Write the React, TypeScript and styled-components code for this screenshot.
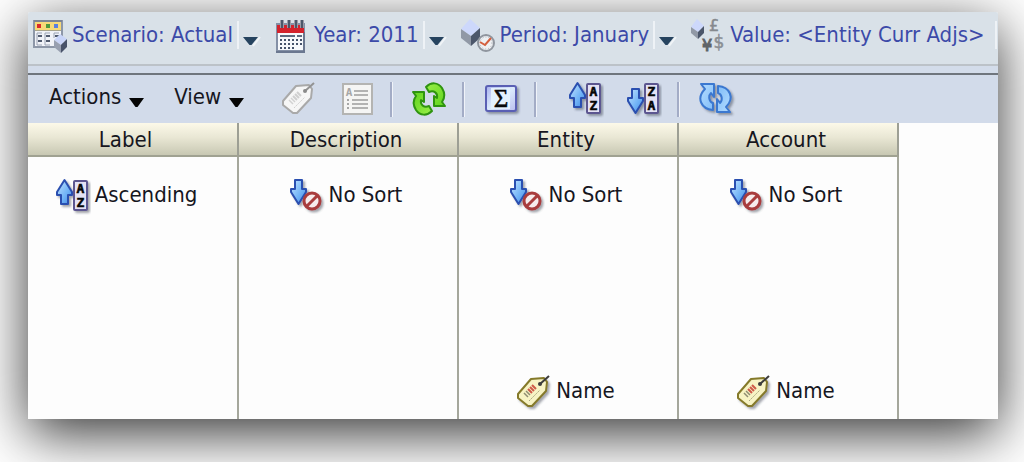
import React from "react";
import styled, { createGlobalStyle } from "styled-components";

const GlobalStyle = createGlobalStyle`
  * { box-sizing: border-box; }
  body {
    margin: 0;
    background: #fff;
    font-family: "DejaVu Sans Condensed", "DejaVu Sans", Tahoma, sans-serif;
    font-size: 22px;
    line-height: 28px;
    color: #16161e;
  }
`;

const Panel = styled.main`
  margin: 12px 26px 43px 28px;
  background: #fdfdfd;
  border-radius: 2px 2px 0 0;
  box-shadow: 0 15px 56px rgba(0, 0, 0, 0.8);
`;

const PovBar = styled.nav`
  display: flex;
  height: 52px;
  padding: 6px 1px 0 5px;
  gap: 14px;
  overflow: hidden;
  border-radius: 2px 2px 0 0;
  background: #d9e1e8;
`;

const PovButton = styled.button<{ $fill?: boolean }>`
  display: flex;
  flex: ${(p) => (p.$fill ? "1 0 auto" : "none")};
  height: 36px;
  padding: 0;
  border: 0;
  background: none;
  font: inherit;
  color: #3c4aa8;
  text-align: left;
  white-space: nowrap;
`;

const PovLabel = styled.span<{ $fill?: boolean }>`
  flex: ${(p) => (p.$fill ? 1 : "none")};
  height: 28px;
  margin: 3px 0 0 5px;
  padding-right: 4px;
  border-right: 2px solid #eef2f6;
`;

const PovArrow = styled.svg`
  flex: none;
  width: 19px;
  height: 12px;
  margin: 18px 0 0 3px;
`;

const Divider = styled.div`
  height: 11px;
  border-top: 2px solid #bcc2c8;
  border-bottom: 2px solid #6f757d;
  background: #d3dcea;
`;

const Toolbar = styled.div`
  display: flex;
  align-items: center;
  height: 48px;
  padding-left: 21px;
  overflow: hidden;
  background: #d2dbea;
`;

const MenuButton = styled.button`
  display: flex;
  flex: none;
  align-items: center;
  gap: 8px;
  margin-right: 30px;
  padding: 0 0 4px;
  border: 0;
  background: none;
  font: inherit;
  color: inherit;
`;

const MenuArrow = styled.svg`
  width: 15px;
  height: 9px;
  margin-top: 10px;
`;

const ToolGroup = styled.div<{ $start?: number }>`
  display: flex;
  flex: none;
  gap: 24px;
  margin-left: ${(p) => p.$start ?? 0}px;
`;

const ToolButton = styled.button`
  display: flex;
  padding: 0;
  border: 0;
  background: none;
`;

const Separator = styled.span<{ $wide?: boolean }>`
  flex: none;
  width: 3px;
  height: 35px;
  margin: 0 ${(p) => (p.$wide ? 32 : 19)}px 0 16px;
  border-left: 2px solid #a3acc6;
  border-right: 1px solid #f0f3f9;
`;

const Grid = styled.table`
  width: 100%;
  table-layout: fixed;
  border-collapse: separate;
  border-spacing: 0;
`;

const Col = styled.col<{ $width?: number }>`
  width: ${(p) => (p.$width ? `${p.$width}px` : "auto")};
`;

const HeadCell = styled.th<{ $first?: boolean }>`
  height: 34px;
  padding: 2px ${(p) => (p.$first ? 14 : 4)}px 0 0;
  border-right: 2px solid #9d9f94;
  border-bottom: 2px solid #a0a292;
  background: linear-gradient(#fcf9e9, #e9e7d4 45%, #c8c8b3);
  font-weight: 400;
  text-align: center;
`;

const BodyCell = styled.td<{ $first?: boolean; $bottom?: boolean }>`
  height: ${(p) => (p.$bottom ? 182 : 80)}px;
  padding: ${(p) => (p.$bottom ? 0 : 22)}px ${(p) => (p.$first ? 12 : 4)}px
    ${(p) => (p.$bottom ? 10 : 0)}px 0;
  border-right: 2px solid #a5a79c;
  vertical-align: ${(p) => (p.$bottom ? "bottom" : "top")};
`;

const CellItem = styled.div`
  display: flex;
  justify-content: center;
  gap: 5px;
  height: 34px;
`;

const CellText = styled.span`
  padding-top: 2px;
`;

const EmptyCell = styled.td``;

const Glyph = styled.svg`
  flex: none;
  width: 34px;
  height: 34px;
  overflow: visible;
`;

const Defs = styled.svg`
  position: absolute;
  width: 0;
  height: 0;
`;

const Gradients = () => (
  <Defs aria-hidden="true">
    <defs>
      <linearGradient id="blue" x1="0" y1="0" x2="1" y2="1">
        <stop offset="0" stopColor="#c4e4ff" />
        <stop offset="0.6" stopColor="#6fb2f6" />
        <stop offset="1" stopColor="#3f86e0" />
      </linearGradient>
      <linearGradient id="sky" x1="0" y1="0" x2="1" y2="1">
        <stop offset="0" stopColor="#b4dcff" />
        <stop offset="1" stopColor="#7fbcf8" />
      </linearGradient>
      <linearGradient id="green" x1="0" y1="0" x2="1" y2="1">
        <stop offset="0" stopColor="#9bf04a" />
        <stop offset="1" stopColor="#5fd31c" />
      </linearGradient>
      <linearGradient id="lilac" x1="0" y1="0" x2="1" y2="1">
        <stop offset="0" stopColor="#a9b2ee" />
        <stop offset="0.5" stopColor="#dbeafc" />
        <stop offset="1" stopColor="#b9bdf0" />
      </linearGradient>
      <filter id="drop" x="-20%" y="-20%" width="150%" height="150%">
        <feDropShadow dx="2" dy="2" stdDeviation="1" floodColor="#333a4a" floodOpacity="0.45" />
      </filter>
    </defs>
  </Defs>
);

const ScenarioIcon = () => (
  <Glyph viewBox="0 0 34 34">
    <rect x="1" y="3" width="28" height="26" fill="#f1f3f8" stroke="#8d97a8" strokeWidth="2" />
    <rect x="2" y="4" width="26" height="8" fill="#f7d978" />
    <path d="M1 3H29" stroke="#7c8494" strokeWidth="2" />
    <rect x="4" y="6" width="4" height="4" fill="#d92a2a" />
    <rect x="13" y="6" width="4" height="4" fill="#4f9a3c" />
    <rect x="21" y="6" width="4" height="4" fill="#5b7fe0" />
    <path d="M2 12.500H28" stroke="#a9a58a" />
    <path d="M4 15V27H9M12 15V27H17M21 15V20M4 15H9M12 15H17M21 15H26" fill="none" stroke="#9aa3b4" />
    <path d="M5 18H9M5 23H9M13 18H17M13 23H17M22 18H26" stroke="#525c70" strokeWidth="2" />
    <path d="M21 22L27 16L34 21L28 27Z" fill="#c9d5f8" />
    <path d="M21 22L28 27V35L21 29Z" fill="#98a0b0" />
    <path d="M28 27L34 21V29L28 35Z" fill="#48536a" />
  </Glyph>
);

const CalendarIcon = () => (
  <Glyph viewBox="0 0 34 34">
    <rect x="2" y="6" width="27" height="27" fill="#f6f8fb" stroke="#8490a6" strokeWidth="2" />
    <path d="M1 34H30M29 14V34" stroke="#6b7890" strokeWidth="2" />
    <rect x="2" y="7" width="27" height="8" fill="#d3222c" />
    <path d="M7 2V10M14 2V10M21 2V10M27 2V10" stroke="#f0dfe3" strokeWidth="4" />
    <path d="M7 2V10M14 2V10M21 2V10M27 2V10" stroke="#4b586b" strokeWidth="3" />
    <path d="M5 18H20M22 18H27" stroke="#5d6a80" strokeWidth="2" />
    <path d="M5 22H27M5 26H27M5 30H20" stroke="#46536b" strokeWidth="2" strokeDasharray="2 2" />
  </Glyph>
);

const PeriodIcon = () => (
  <Glyph viewBox="0 0 34 34">
    <path d="M0 11L9 1L19 10L10 18Z" fill="#cdd8fb" />
    <path d="M0 11L10 18V28L0 20Z" fill="#9199a6" />
    <path d="M10 18L19 10V20L10 28Z" fill="#4b566a" />
    <circle cx="25" cy="25" r="8" fill="#eef0f3" stroke="#8f959e" strokeWidth="2" />
    <circle cx="25" cy="25" r="6" fill="none" stroke="#a8adb5" strokeDasharray="1 2" />
    <path d="M19 24L24 27L30 20" fill="none" stroke="#d4603f" strokeWidth="2" />
  </Glyph>
);

const ValueIcon = () => (
  <Glyph viewBox="0 0 34 34" fontFamily="DejaVu Sans, sans-serif" fontSize="16" textAnchor="middle">
    <path d="M0 9L6 1L13 8L7 14Z" fill="#cdd8fb" />
    <path d="M0 9L7 14V21L0 15Z" fill="#9199a6" />
    <path d="M7 14L13 8V15L7 21Z" fill="#4b566a" />
    <text x="23" y="13" fill="#85898e" stroke="#85898e" strokeWidth="0.500">£</text>
    <text x="16" y="33" fill="#606468" stroke="#606468" strokeWidth="1">¥</text>
    <text x="28" y="30" fill="#8b8f94" stroke="#8b8f94" strokeWidth="0.500" fontSize="17">$</text>
  </Glyph>
);

const TagShape = ({ muted }: { muted?: boolean }) => (
  <Glyph viewBox="0 0 34 34">
    <path
      d="M1 19L14 4L27 3L30 7L29 16L15 31L11 31L1 23Z"
      fill={muted ? "#f6f6f6" : "#f7f3c4"}
      stroke={muted ? "#a9a9a9" : "#857a2c"}
      strokeWidth="2"
      strokeLinejoin="round"
      filter={muted ? undefined : "url(#drop)"}
    />
    <path d="M7 18L11 22M9 16L13 20" stroke={muted ? "#d2d2d2" : "#8f8d72"} strokeWidth="1.500" />
    <path d="M11 14L15 18M13 12L17 16M15 10L19 14" stroke={muted ? "#cfcfcf" : "#cf5a48"} strokeWidth="2" />
    <path d="M12 26L23 15" stroke={muted ? "#d0d0d0" : "#a8a680"} strokeDasharray="2 1" />
    <path d="M23 9L32 1" stroke={muted ? "#939393" : "#3c3c3c"} strokeWidth="2" />
    <circle cx="23" cy="9" r="2" fill={muted ? "#8a8a8a" : "#3c3c3c"} />
  </Glyph>
);

const PropertiesIcon = () => (
  <Glyph viewBox="0 0 34 34">
    <rect x="3" y="2" width="29" height="30" fill="#f5f5f4" stroke="#b4b4b2" strokeWidth="2" />
    <text x="9" y="14" fontSize="11" fontWeight="bold" fill="#a6a6a6" textAnchor="middle" fontFamily="DejaVu Sans Mono, monospace">A</text>
    <path d="M14 9H28M14 13H28M12 18H28M12 22H28M12 26H28" stroke="#b3b3b3" strokeWidth="2" />
    <path d="M7 18H9M7 22H9M7 26H9" stroke="#a6a6a6" strokeWidth="2" />
  </Glyph>
);

const greenArrow = "M14 5C19 0 26 0 30 6C33 11 33 16 30 20L33 24H22V14L25 16C26 11 22 8 17 10Z";
const RefreshIcon = () => (
  <Glyph viewBox="0 0 34 34">
    <g fill="url(#green)" stroke="#2f9410" strokeWidth="2" strokeLinejoin="round">
      <path d={greenArrow} />
      <path d={greenArrow} transform="rotate(180 17 17)" />
    </g>
  </Glyph>
);

const SigmaIcon = () => (
  <Glyph viewBox="0 0 34 34">
    <rect x="2" y="4" width="30" height="25" rx="2" fill="url(#lilac)" stroke="#5a5fb4" strokeWidth="2" filter="url(#drop)" />
    <rect x="7" y="6" width="19" height="21" fill="#e3f1fd" />
    <text x="17" y="25" fontSize="25" fill="#080808" stroke="#080808" strokeWidth="0.500" textAnchor="middle" fontFamily="Liberation Serif, serif">Σ</text>
  </Glyph>
);

const UpArrow = () => (
  <path d="M8.500 1L16 13V16H12V25H5V16H1V13Z" fill="url(#blue)" stroke="#2c50b0" strokeWidth="2" strokeLinejoin="round" filter="url(#drop)" />
);

const DownArrow = ({ top }: { top: number }) => (
  <path
    d="M5 1H12V10H16V13L8.500 25L1 13V10H5Z"
    transform={`translate(0 ${top})`}
    fill="url(#blue)"
    stroke="#2c50b0"
    strokeWidth="2"
    strokeLinejoin="round"
    filter="url(#drop)"
  />
);

const SortIcon = ({ descending }: { descending?: boolean }) => (
  <Glyph viewBox="0 0 34 34">
    {descending ? <DownArrow top={6} /> : <UpArrow />}
    <rect x="18" y="2" width="13" height="29" rx="1" fill="#e4e2f4" stroke="#5c5690" strokeWidth="2" filter="url(#drop)" />
    <g fontSize="13" fontWeight="bold" fill="#050505" stroke="#050505" strokeWidth="0.500" textAnchor="middle" fontFamily="DejaVu Sans Mono, monospace">
      <text x="24.500" y="14">{descending ? "Z" : "A"}</text>
      <text x="24.500" y="28">{descending ? "A" : "Z"}</text>
    </g>
  </Glyph>
);

const NoSortIcon = () => (
  <Glyph viewBox="0 0 34 34">
    <DownArrow top={0} />
    <g filter="url(#drop)">
      <circle cx="22" cy="22" r="8" fill="#f7ecec" stroke="#a93c3e" strokeWidth="3" />
      <path d="M17 27L27 17" stroke="#a93c3e" strokeWidth="3" />
    </g>
  </Glyph>
);

const blueArrow = "M2 2H15V15L12 11C9 14 10 20 14 21V28C2 27 -3 16 6 7Z";
const SyncIcon = () => (
  <Glyph viewBox="0 0 34 34">
    <g fill="url(#sky)" stroke="#3b78d0" strokeWidth="2" strokeLinejoin="round" filter="url(#drop)">
      <path d={blueArrow} />
      <path d={blueArrow} transform="rotate(180 16.500 16)" />
    </g>
  </Glyph>
);

const pov = [
  { text: "Scenario: Actual", icon: <ScenarioIcon /> },
  { text: "Year: 2011", icon: <CalendarIcon /> },
  { text: "Period: January", icon: <PeriodIcon /> },
  { text: "Value: <Entity Curr Adjs>", icon: <ValueIcon />, last: true },
];

const columns = [
  { title: "Label", width: 211, sort: "Ascending" },
  { title: "Description", width: 220, sort: "No Sort" },
  { title: "Entity", width: 220, sort: "No Sort", display: "Name" },
  { title: "Account", width: 220, sort: "No Sort", display: "Name" },
];

const Tool = ({ label, children }: { label: string; children: React.ReactNode }) => (
  <ToolButton type="button" aria-label={label}>{children}</ToolButton>
);

const Menu = ({ label }: { label: string }) => (
  <MenuButton type="button">
    {label}
    <MenuArrow viewBox="0 0 15 9"><path d="M0 0H15L8.500 9H6.500Z" fill="#050505" /></MenuArrow>
  </MenuButton>
);

export default function App() {
  return (
    <>
      <GlobalStyle />
      <Gradients />
      <Panel>
        <PovBar aria-label="Point of view">
          {pov.map((item) => (
            <PovButton key={item.text} type="button" $fill={item.last}>
              {item.icon}
              <PovLabel $fill={item.last}>{item.text}</PovLabel>
              {!item.last && (
                <PovArrow viewBox="0 0 19 12">
                  <path d="M11 10L18 1" stroke="#f0f4f7" strokeWidth="2" />
                  <path d="M1 1H16L9.500 9H7.500Z" fill="#26435f" />
                </PovArrow>
              )}
            </PovButton>
          ))}
        </PovBar>
        <Divider />
        <Toolbar role="toolbar" aria-label="Journal list">
          <Menu label="Actions" />
          <Menu label="View" />
          <ToolGroup $start={8}>
            <Tool label="Label"><TagShape muted /></Tool>
            <Tool label="Properties"><PropertiesIcon /></Tool>
          </ToolGroup>
          <Separator />
          <Tool label="Refresh"><RefreshIcon /></Tool>
          <Separator />
          <Tool label="Totals"><SigmaIcon /></Tool>
          <Separator $wide />
          <ToolGroup>
            <Tool label="Sort ascending"><SortIcon /></Tool>
            <Tool label="Sort descending"><SortIcon descending /></Tool>
          </ToolGroup>
          <Separator />
          <Tool label="Reset"><SyncIcon /></Tool>
        </Toolbar>
        <Grid>
          <colgroup>
            {columns.map((c) => <Col key={c.title} $width={c.width} />)}
            <Col />
          </colgroup>
          <thead>
            <tr>
              {columns.map((c, i) => (
                <HeadCell key={c.title} scope="col" $first={i === 0}>{c.title}</HeadCell>
              ))}
              <EmptyCell />
            </tr>
          </thead>
          <tbody>
            <tr>
              {columns.map((c, i) => (
                <BodyCell key={c.title} $first={i === 0}>
                  <CellItem>
                    {c.sort === "Ascending" ? <SortIcon /> : <NoSortIcon />}
                    <CellText>{c.sort}</CellText>
                  </CellItem>
                </BodyCell>
              ))}
              <EmptyCell />
            </tr>
            <tr>
              {columns.map((c, i) => (
                <BodyCell key={c.title} $first={i === 0} $bottom>
                  {c.display && <CellItem><TagShape /><CellText>{c.display}</CellText></CellItem>}
                </BodyCell>
              ))}
              <EmptyCell />
            </tr>
          </tbody>
        </Grid>
      </Panel>
    </>
  );
}
